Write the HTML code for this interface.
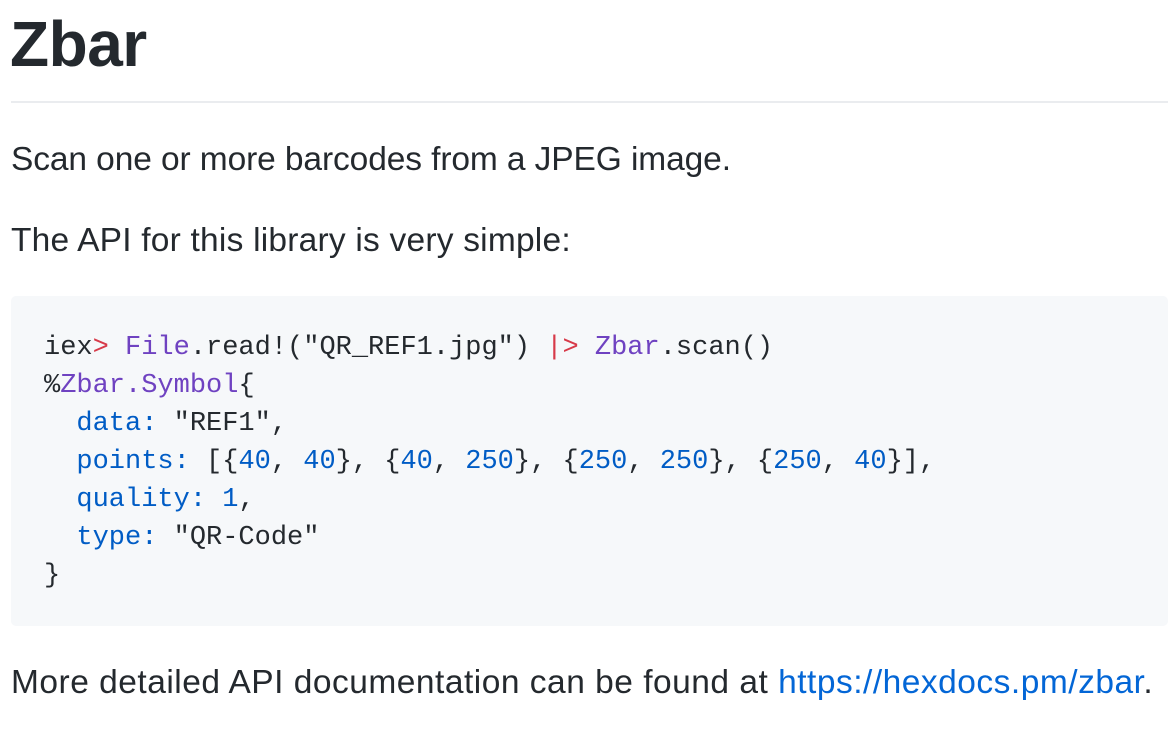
<!DOCTYPE html>
<html><head><style>
body{margin:0;width:1168px;height:730px;overflow:hidden;background:#fff;color:#24292e;font-family:"Liberation Sans",sans-serif;}
h1{position:absolute;left:10px;top:6px;margin:0;font-size:64px;font-weight:bold;line-height:76px;letter-spacing:-0.5px}
.hr{position:absolute;left:11px;right:0;top:101px;height:2px;background:#eaecef}
p{position:absolute;left:11px;margin:0;font-size:33.5px;line-height:40px;white-space:nowrap}
pre{position:absolute;left:11px;right:0;top:296px;height:330px;margin:0;background:#f6f8fa;border-radius:5px;font-family:"Liberation Mono",monospace;font-size:27px;line-height:38px;padding:33px 0 0 33px;box-sizing:border-box;color:#24292e}
.r{color:#d73a49}.pu{color:#6f42c1}.b{color:#005cc5}.s{color:#24292e}
a{color:#0366d6;text-decoration:none}
</style></head><body>
<h1>Zbar</h1>
<div class="hr"></div>
<p style="top:140px;letter-spacing:-0.1px">Scan one or more barcodes from a JPEG image.</p>
<p style="top:221px;letter-spacing:0.22px">The API for this library is very simple:</p>
<pre>iex<span class="r">&gt;</span> <span class="pu">File</span>.read!(<span class="s">"QR_REF1.jpg"</span>) <span class="r">|&gt;</span> <span class="pu">Zbar</span>.scan()
%<span class="pu">Zbar.Symbol</span>{
  <span class="b">data:</span> <span class="s">"REF1"</span>,
  <span class="b">points:</span> [{<span class="b">40</span>, <span class="b">40</span>}, {<span class="b">40</span>, <span class="b">250</span>}, {<span class="b">250</span>, <span class="b">250</span>}, {<span class="b">250</span>, <span class="b">40</span>}],
  <span class="b">quality:</span> <span class="b">1</span>,
  <span class="b">type:</span> <span class="s">"QR-Code"</span>
}</pre>
<p style="top:663px;letter-spacing:0.5px">More detailed API documentation can be found at <a>https://hexdocs.pm/zbar</a>.</p>
</body></html>
